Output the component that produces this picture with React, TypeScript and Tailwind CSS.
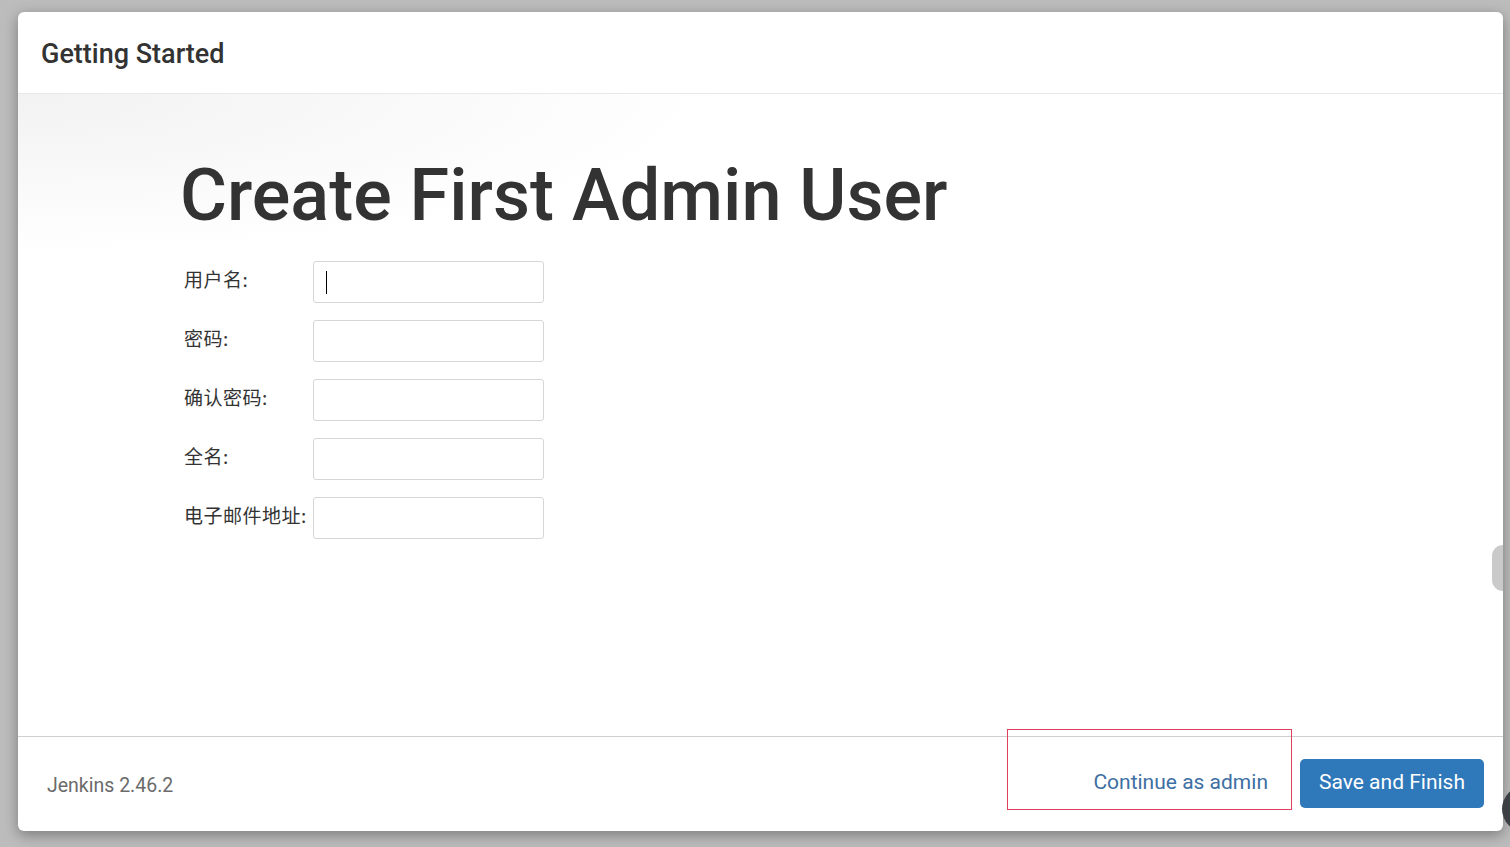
import React from "react";

const rows = ["用户名:", "密码:", "确认密码:", "全名:", "电子邮件地址:"];

export default function App() {
  return (
    <div className="relative h-[847px] w-[1510px] overflow-hidden bg-[#bcbcbc] pl-[18px] pt-[12px]" style={{ fontFamily: "Roboto, 'Noto Sans CJK SC', sans-serif" }}>
      <div className="relative flex h-[819px] w-[1485px] flex-col rounded-[6px] bg-white shadow-[0_4px_14px_rgba(0,0,0,0.35)]">
        <div className="flex h-[82px] shrink-0 items-center border-b border-[#e8e8e8] pl-[23px] pt-[3px]">
          <h2 className="text-[27px] font-medium leading-none text-[#333]">Getting Started</h2>
        </div>
        <div className="flex-1 bg-[radial-gradient(ellipse_700px_160px_at_0%_0%,#f2f2f2,#ffffff)] pl-[162px] pt-[62px]">
          <h1 className="text-[72px] font-medium leading-[79px] text-[#333]">Create First Admin User</h1>
          <div className="mt-[26px] flex flex-col gap-[17px]">
            {rows.map((label, i) => (
              <div key={label} className="flex items-start">
                <div className="w-[133px] pl-[4px] pt-[6px] text-[19px] leading-[24px] tracking-[0.5px] text-[#333]" style={{ fontFamily: "'Noto Sans CJK SC', sans-serif" }}>
                  {label}
                </div>
                <div className="relative h-[42px] w-[231px] rounded-[3px] border border-[#d6d6d6] bg-white">
                  {i === 0 && <div className="absolute left-[12px] top-[9px] h-[23px] w-[1px] bg-black" />}
                </div>
              </div>
            ))}
          </div>
        </div>
        <div className="flex h-[95px] shrink-0 items-center border-t border-[#cfcfcf] pl-[29px] pr-[19px]">
          <span className="mt-[3px] text-[19.5px] text-[#6b6b6b]">Jenkins 2.46.2</span>
          <div className="mb-[2px] ml-auto flex items-center">
            <span className="mr-[32px] text-[21px] text-[#3d6fa3]">Continue as admin</span>
            <button className="h-[49px] rounded-[5px] bg-[#2f78ba] px-[19px] text-[21px] text-white">Save and Finish</button>
          </div>
        </div>
        <div className="absolute left-[989px] top-[717px] h-[81px] w-[285px] border border-[#e0405c]" />
        <div className="absolute right-0 top-[533px] h-[46px] w-[11px] rounded-l-[12px] bg-[#cacaca]" />
      </div>
      <div className="absolute right-[-38px] top-[786px] h-[46px] w-[46px] rounded-full bg-[#3c3f44]" />
    </div>
  );
}
